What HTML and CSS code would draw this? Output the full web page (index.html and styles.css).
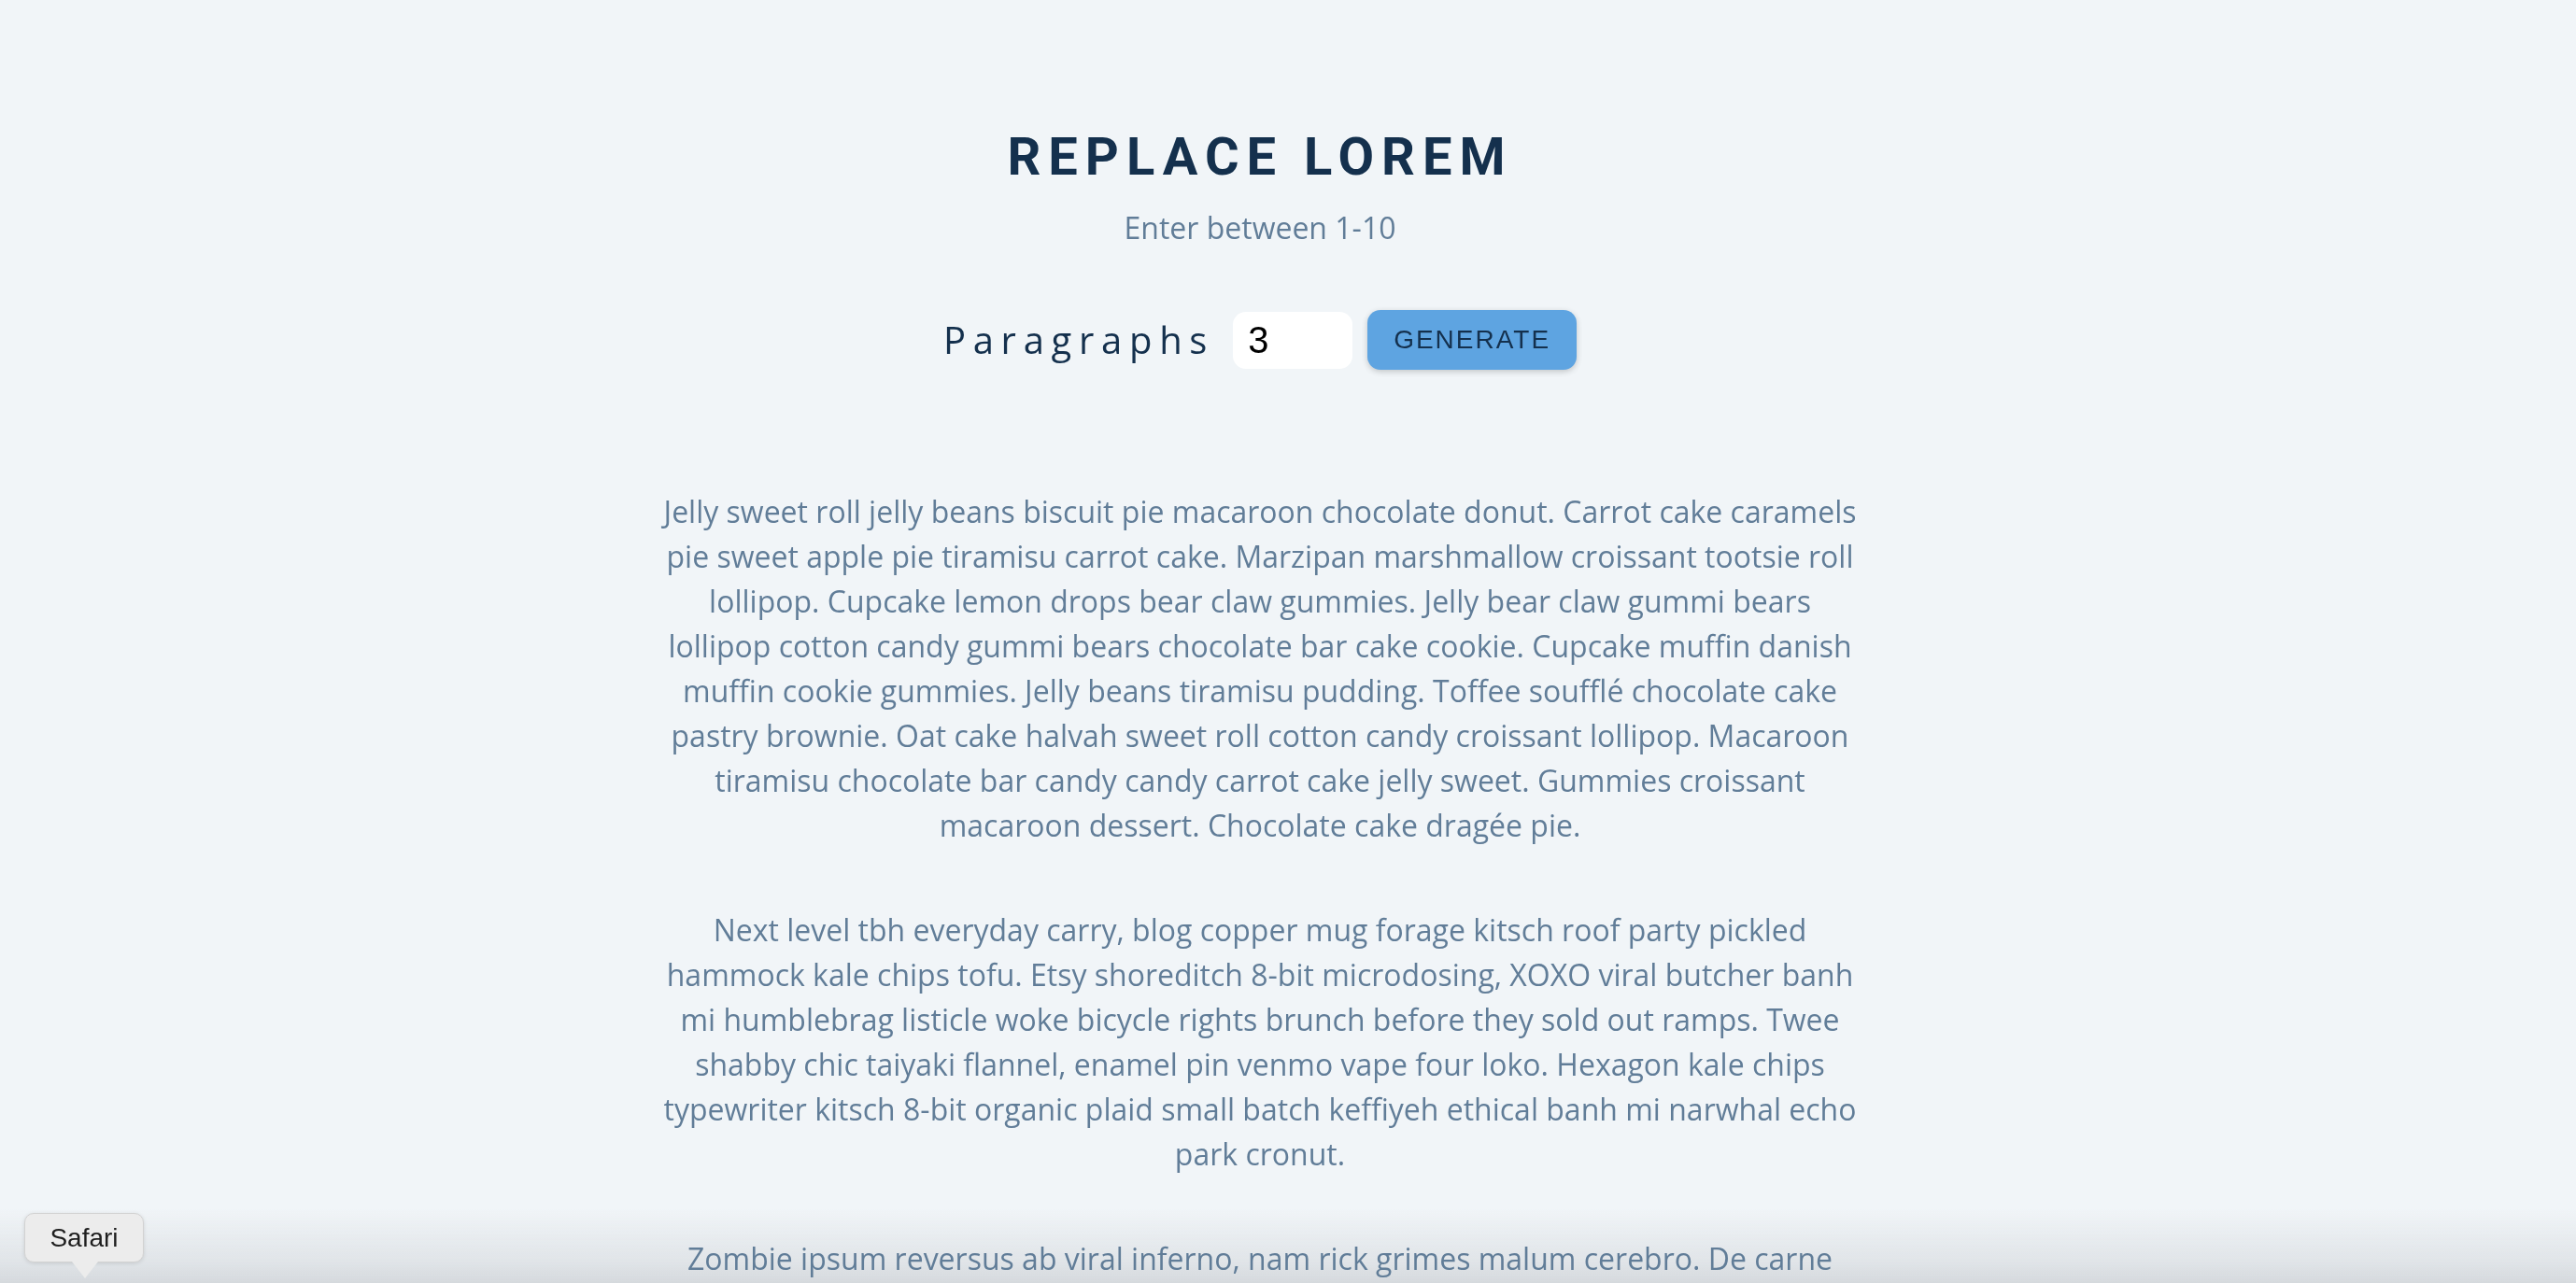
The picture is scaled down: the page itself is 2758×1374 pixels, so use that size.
FILE: index.html
```html
<!DOCTYPE html>
<html lang="en">
<head>
<meta charset="utf-8">
<title>Replace Lorem</title>
<link rel="stylesheet" href="styles.css">
</head>
<body>
<section class="section-center">
  <h3 class="title">Replace lorem</h3>
  <p class="subtitle">Enter between 1-10</p>
  <form class="lorem-form">
    <label class="form-label" for="amount">paragraphs</label>
    <input class="form-input" type="number" id="amount" name="amount" value="3">
    <button class="btn" type="button">generate</button>
  </form>
  <article class="lorem-text">
    <p>Jelly sweet roll jelly beans biscuit pie macaroon chocolate donut. Carrot cake caramels pie sweet apple pie tiramisu carrot cake. Marzipan marshmallow croissant tootsie roll lollipop. Cupcake lemon drops bear claw gummies. Jelly bear claw gummi bears lollipop cotton candy gummi bears chocolate bar cake cookie. Cupcake muffin danish muffin cookie gummies. Jelly beans tiramisu pudding. Toffee soufflé chocolate cake pastry brownie. Oat cake halvah sweet roll cotton candy croissant lollipop. Macaroon tiramisu chocolate bar candy candy carrot cake jelly sweet. Gummies croissant macaroon dessert. Chocolate cake dragée pie.</p>
    <p>Next level tbh everyday carry, blog copper mug forage kitsch roof party pickled hammock kale chips tofu. Etsy shoreditch 8-bit microdosing, XOXO viral butcher banh mi humblebrag listicle woke bicycle rights brunch before they sold out ramps. Twee shabby chic taiyaki flannel, enamel pin venmo vape four loko. Hexagon kale chips typewriter kitsch 8-bit organic plaid small batch keffiyeh ethical banh mi narwhal echo park cronut.</p>
    <p>Zombie ipsum reversus ab viral inferno, nam rick grimes malum cerebro. De carne lumbering animata corpora quaeritis. Summus brains sit, morbo vel maleficia? De apocalypsi gorger omero undead survivor dictum mauris. Hi mindless mortuis soulless creaturas, imo evil stalking monstra adventus resi dentevil vultus comedat cerebella viventium.</p>
  </article>
</section>
<div class="dock-fade"></div>
<div class="dock-tooltip">Safari</div>
</body>
</html>
```

FILE: styles.css
```css
* {
  box-sizing: border-box;
}

html,
body {
  margin: 0;
  padding: 0;
}

body {
  background: #f1f5f8;
  color: #102a42;
  font-family: "Open Sans", "Noto Sans", sans-serif;
  font-size: 32px;
  line-height: 1.5;
  padding-right: 60px;
  min-height: 1374px;
}

.section-center {
  width: 1280px;
  margin: 0 auto;
  padding-top: 140px;
  text-align: center;
}

.title {
  margin: 0 0 24px;
  font-family: Roboto, "Liberation Sans", sans-serif;
  font-weight: 700;
  font-size: 56px;
  line-height: 1;
  letter-spacing: 8px;
  text-transform: uppercase;
  color: #14304d;
}

.subtitle {
  margin: 0;
  color: #617d98;
}

.lorem-form {
  margin-top: 64px;
  margin-bottom: 128px;
  display: flex;
  justify-content: center;
  align-items: center;
}

.form-label {
  font-size: 40px;
  line-height: 1.5;
  letter-spacing: 7.7px;
  text-transform: capitalize;
  color: #14304d;
}

.form-input {
  width: 128px;
  height: 61px;
  padding: 8px 16px;
  margin: 0 16px 0 20px;
  border: none;
  border-radius: 14px;
  background: #ffffff;
  font-family: "Liberation Sans", Arial, sans-serif;
  font-size: 40px;
  color: #000000;
  outline: none;
  -moz-appearance: textfield;
}

.form-input::-webkit-outer-spin-button,
.form-input::-webkit-inner-spin-button {
  -webkit-appearance: none;
  margin: 0;
}

.btn {
  height: 64px;
  padding: 0 24px;
  border: 4px solid transparent;
  border-radius: 14px;
  background: #5ea4e1;
  color: #14304d;
  font-family: "Liberation Sans", Arial, sans-serif;
  font-size: 28px;
  font-weight: 400;
  letter-spacing: 2px;
  text-transform: uppercase;
  box-shadow: 0 2px 6px rgba(0, 0, 0, 0.2);
  cursor: pointer;
}

.lorem-text p {
  margin: 0 0 64px;
  color: #617d98;
}

.dock-fade {
  position: fixed;
  z-index: -1;
  left: 0;
  right: 0;
  bottom: 0;
  height: 80px;
  pointer-events: none;
  background: linear-gradient(to bottom, rgba(226, 229, 233, 0) 0%, rgba(214, 218, 222, 0.6) 70%, rgba(208, 212, 216, 0.85) 100%);
}

.dock-tooltip {
  position: fixed;
  left: 26px;
  top: 1299px;
  width: 128px;
  height: 53px;
  display: flex;
  align-items: center;
  justify-content: center;
  background: #ececec;
  border: 1px solid #d2d2d2;
  border-radius: 10px;
  box-shadow: 0 1px 4px rgba(0, 0, 0, 0.12);
  font-family: "Liberation Sans", Arial, sans-serif;
  font-size: 28px;
  line-height: 1;
  color: #1e1e1e;
}

.dock-tooltip::after {
  content: "";
  position: absolute;
  left: 50px;
  bottom: -18px;
  border-left: 14px solid transparent;
  border-right: 14px solid transparent;
  border-top: 18px solid #ececec;
}
```
